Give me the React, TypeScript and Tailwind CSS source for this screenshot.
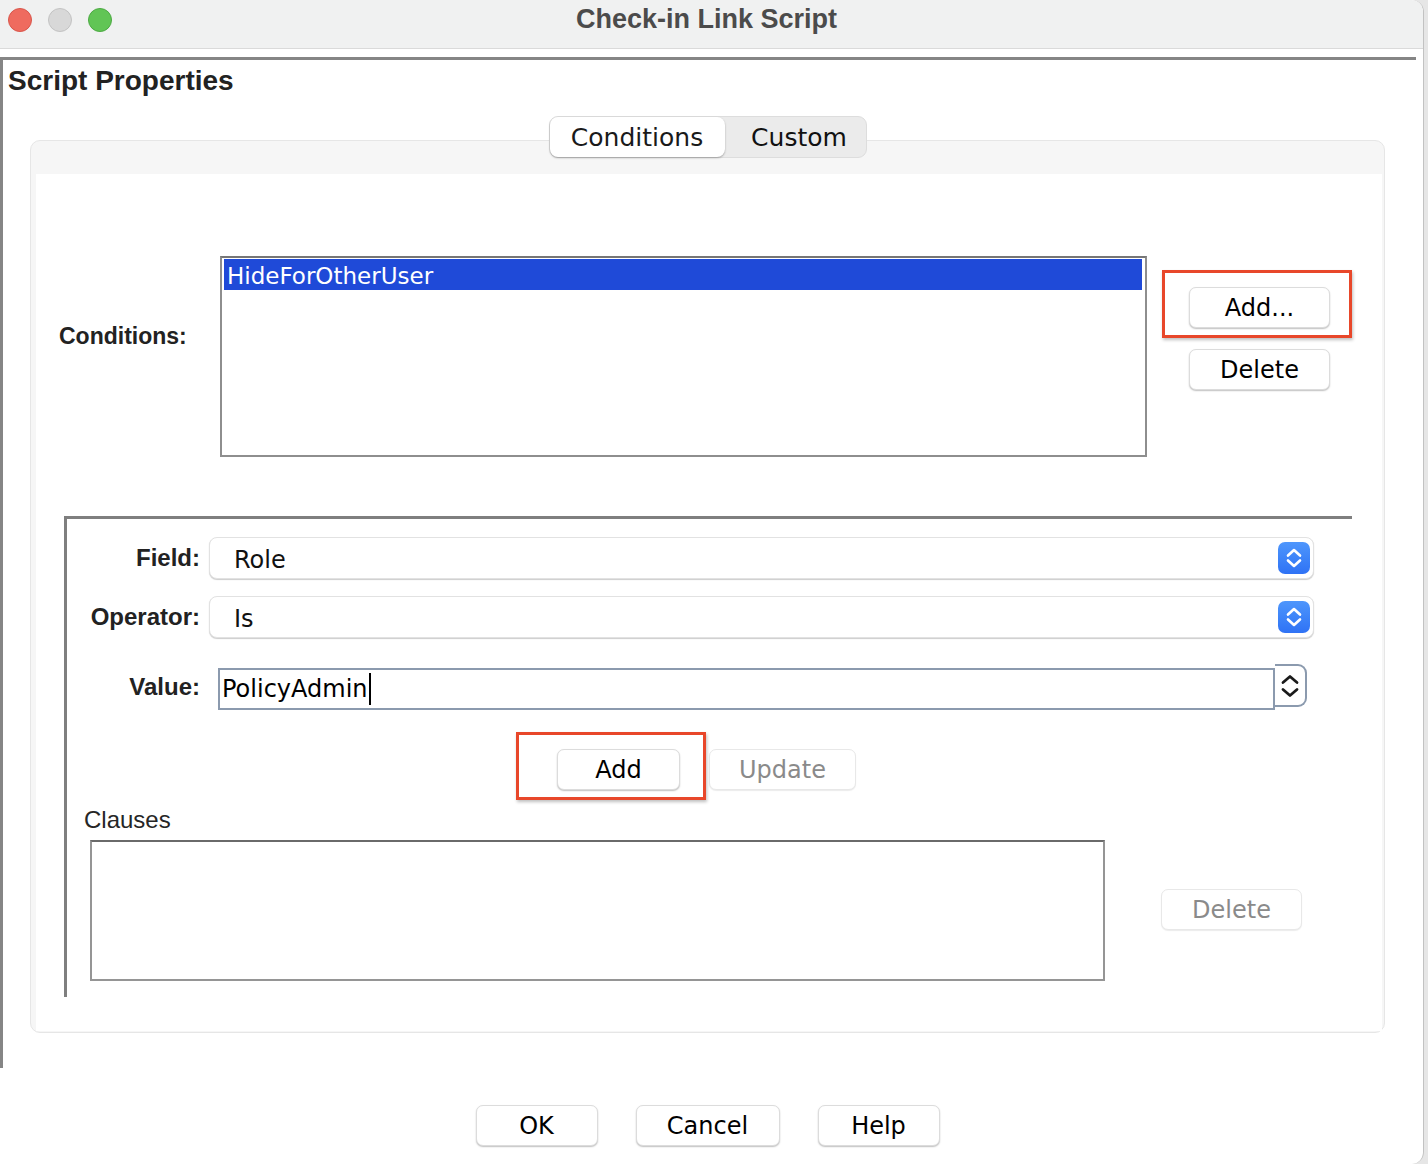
/**
 * Check-in Link Script — diálogo de propiedades del script.
 */
import clsx from 'clsx'
import type { ReactNode } from 'react'

const ui = "font-['DejaVu_Sans',sans-serif]"
const hel = "font-['Liberation_Sans',Arial,sans-serif]"

function Boton({ children, disabled = false, className = '' }: { children: ReactNode; disabled?: boolean; className?: string }) {
  return (
    <button
      disabled={disabled}
      className={clsx(
        ui,
        'flex h-[41px] items-center justify-center rounded-[7px] border bg-white text-[24px] leading-none',
        disabled
          ? 'border-[#e8e8e8] text-[#8a8a8a] shadow-[0_1px_1px_rgba(0,0,0,0.08)]'
          : 'border-[#dcdcdc] text-black shadow-[0_1px_1.5px_rgba(0,0,0,0.25)]',
        className,
      )}
    >
      {children}
    </button>
  )
}

function Marca({ className }: { className: string }) {
  return (
    <span
      className={clsx(
        'pointer-events-none absolute border-[3px] border-[#e8472a] shadow-[1px_2px_3px_rgba(0,0,0,0.25)]',
        className,
      )}
    />
  )
}

function StepperAzul() {
  return (
    <span className="flex h-[32px] w-[32px] items-center justify-center rounded-[7px] bg-linear-to-b from-[#4e96fc] to-[#2f72f5]">
      <svg width="32" height="32" viewBox="0 0 32 32" fill="none" stroke="white" strokeWidth="2.6" strokeLinecap="round" strokeLinejoin="round">
        <path d="M10 13.5 16 8l6 5.5" />
        <path d="M10 18.5 16 24l6-5.5" />
      </svg>
    </span>
  )
}

function Desplegable({ valor }: { valor: string }) {
  return (
    <div className="flex h-[42px] w-[1105px] items-center justify-between rounded-[8px] border border-[#e2e2e2] bg-white pl-[24px] pr-[3px] shadow-[0_1px_1px_rgba(0,0,0,0.2)]">
      <span className={clsx(ui, 'pt-[3px] text-[24px] text-[#111]')}>{valor}</span>
      <StepperAzul />
    </div>
  )
}

function Etiqueta({ children }: { children: ReactNode }) {
  return (
    <div className={clsx(hel, 'w-[133px] text-right text-[24px] font-bold leading-[28px] text-[#222]')}>
      {children}
    </div>
  )
}

export default function App() {
  return (
    <div className="flex h-[1164px] w-[1428px] overflow-hidden bg-[#e6e6e6]">
      <div className="flex h-full w-[1424px] flex-col rounded-r-[12px] border-r border-[#c2c2c2] bg-white">
        {/* barra de título */}
        <div className="grid h-[49px] shrink-0 grid-cols-[1fr_auto_1fr] rounded-tr-[12px] border-b border-[#dadada] bg-[#f0f1f1] pr-[10px]">
          <div className="flex gap-[16px] pl-[8px] pt-[8px]">
            <span className="h-[24px] w-[24px] rounded-full border border-[#d9564b] bg-[#ef6b5f]" />
            <span className="h-[24px] w-[24px] rounded-full border border-[#c3c3c3] bg-[#d8d8d8]" />
            <span className="h-[24px] w-[24px] rounded-full border border-[#4caa43] bg-[#61c555]" />
          </div>
          <div className={clsx(hel, 'pt-[4px] text-[27px] font-bold leading-[30px] text-[#4b4b4b]')}>
            Check-in Link Script
          </div>
          <div />
        </div>

        {/* Script Properties */}
        <div className="mt-[8px] h-[1011px] w-[1416px] shrink-0 border-l-[3px] border-t-[3px] border-[#858585]">
          <div className={clsx(hel, 'pl-[5px] pt-[5px] text-[28px] font-bold leading-[32px] text-[#222]')}>
            Script Properties
          </div>

          <div className="ml-[27px] w-[1355px]">
            <div className="relative z-10 mx-auto -mb-[18px] mt-[19px] flex h-[42px] w-[318px] rounded-[9px] border border-[#dddddd] bg-[#ebebeb]">
              <div className={clsx(ui, 'flex w-[175px] items-center justify-center rounded-[8px] bg-white pt-[2px] text-[25px] text-[#1a1a1a] shadow-[0_1px_2px_rgba(0,0,0,0.3)]')}>
                Conditions
              </div>
              <div className={clsx(ui, 'flex flex-1 items-center justify-center pl-[8px] pt-[2px] text-[25px] text-[#111]')}>
                Custom
              </div>
            </div>

            <div className="h-[893px] rounded-[10px] border border-[#e6e6e6] bg-[#f6f6f6] pb-[1px] pl-[5px] pr-[2px] pt-[33px]">
              <div className="h-[857px] bg-white">
                {/* lista de condiciones */}
                <div className="flex items-start pl-[23px] pt-[82px]">
                  <div className={clsx(hel, 'mt-[66px] w-[161px] text-[23px] font-bold leading-[28px] text-[#222]')}>
                    Conditions:
                  </div>
                  <div className="h-[201px] w-[927px] border-2 border-[#8e8e8e] border-t-[#767676] bg-white pl-[2px] pr-[3px] pt-[1px]">
                    <div className={clsx(ui, 'h-[31px] bg-[#1f4ad8] pl-[3px] pt-[2px] text-[23px] leading-[31px] text-white')}>
                      HideForOtherUser
                    </div>
                  </div>
                  <div className="ml-[42px] mt-[31px] flex flex-col gap-[21px]">
                    <div className="relative">
                      <Boton className="w-[141px]">Add...</Boton>
                      <Marca className="-bottom-[10px] -left-[27px] -right-[22px] -top-[17px]" />
                    </div>
                    <Boton className="w-[141px]">Delete</Boton>
                  </div>
                </div>

                {/* editor de cláusulas */}
                <div className="ml-[28px] mt-[59px] h-[481px] w-[1288px] border-l-[3px] border-t-[3px] border-[#7f7f7f] pt-[18px]">
                  <div className="flex items-center">
                    <Etiqueta>Field:</Etiqueta>
                    <div className="ml-[9px]">
                      <Desplegable valor="Role" />
                    </div>
                  </div>
                  <div className="mt-[17px] flex items-center">
                    <Etiqueta>Operator:</Etiqueta>
                    <div className="ml-[9px]">
                      <Desplegable valor="Is" />
                    </div>
                  </div>
                  <div className="mt-[30px] flex items-center">
                    <div className="-mt-[4px]">
                      <Etiqueta>Value:</Etiqueta>
                    </div>
                    <div className="ml-[18px] flex items-start">
                      <div className="flex h-[42px] w-[1057px] items-center border-2 border-[#8b9aae] bg-white pl-[2px]">
                        <span className={clsx(ui, 'text-[24px] text-black')}>PolicyAdmin</span>
                        <span className="ml-[1px] h-[32px] w-[2px] bg-black" />
                      </div>
                      <div className="-mt-[4px] flex h-[43px] w-[32px] items-center justify-center rounded-r-[9px] border-2 border-l-0 border-[#8b9aae] bg-white">
                        <svg width="22" height="32" viewBox="0 0 22 32" fill="none" stroke="#1a1a1a" strokeWidth="2.8" strokeLinecap="round" strokeLinejoin="round">
                          <path d="M4 12.5 11 6.5l7 6" />
                          <path d="M4 19.5 11 25.5l7-6" />
                        </svg>
                      </div>
                    </div>
                  </div>

                  <div className="ml-[490px] mt-[39px] flex gap-[29px]">
                    <div className="relative">
                      <Boton className="w-[123px]">Add</Boton>
                      <Marca className="-bottom-[10px] -left-[41px] -right-[26px] -top-[17px]" />
                    </div>
                    <Boton disabled className="w-[147px]">Update</Boton>
                  </div>

                  <div className={clsx(hel, 'mt-[16px] pl-[17px] text-[24px] leading-[28px] text-[#262626]')}>
                    Clauses
                  </div>
                  <div className="mt-[6px] flex items-start">
                    <div className="ml-[23px] h-[141px] w-[1015px] border-2 border-[#959595] border-t-[#6a6a6a] bg-white" />
                    <Boton disabled className="ml-[56px] mt-[49px] w-[141px]">Delete</Boton>
                  </div>
                </div>
              </div>
            </div>
          </div>
        </div>

        {/* botones del diálogo */}
        <div className="mt-[37px] flex justify-center gap-[38px] pr-[8px]">
          <Boton className="w-[122px]">OK</Boton>
          <Boton className="w-[144px]">Cancel</Boton>
          <Boton className="w-[122px]">Help</Boton>
        </div>
      </div>
    </div>
  )
}
